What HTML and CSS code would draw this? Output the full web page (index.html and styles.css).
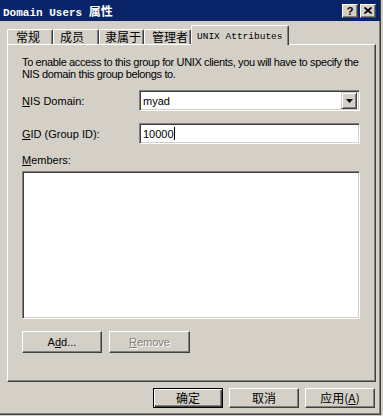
FILE: index.html
```html
<!DOCTYPE html>
<html lang="zh-CN">
<head>
  <meta charset="UTF-8">
  <title>Domain Users 属性</title>
  <link rel="stylesheet" href="styles.css">
</head>
<body>

<div class="window">
  <div class="titlebar">
    <span class="title">Domain Users <span class="title-cjk">属性</span></span>
    <div class="cap-btns">
      <span class="cap-btn">?</span>
      <span class="cap-btn">
        <svg width="8" height="7" viewBox="0 0 8 7"><path d="M0.5 0.5 L7.5 6.5 M7.5 0.5 L0.5 6.5" stroke="#000" stroke-width="1.8"/></svg>
      </span>
    </div>
  </div>

  <div class="tabs">
    <span class="tab tab-1">常规</span>
    <span class="tab tab-2">成员</span>
    <span class="tab tab-3">隶属于</span>
    <span class="tab tab-4">管理者</span>
    <span class="tab active">UNIX Attributes</span>
  </div>

  <div class="panel">
    <p class="intro">To enable access to this group for UNIX clients, you will have to specify the<br>NIS domain this group belongs to.</p>

    <div class="field">
      <label><u>N</u>IS Domain:</label>
      <div class="combo">
        <span class="value">myad</span>
        <span class="drop">
          <svg width="7" height="4" viewBox="0 0 7 4"><path d="M0 0 H7 L3.5 4 Z" fill="#000"/></svg>
        </span>
      </div>
    </div>

    <div class="field gid">
      <label><u>G</u>ID (Group ID):</label>
      <div class="edit"><span class="value">10000</span><span class="caret"></span></div>
    </div>

    <label class="members-label"><u>M</u>embers:</label>
    <div class="listbox"></div>

    <div class="list-btns">
      <button class="btn btn-add">A<u>d</u>d...</button>
      <button class="btn btn-remove" disabled><u>R</u>emove</button>
    </div>
  </div>

  <div class="footer">
    <button class="btn default">确定</button>
    <button class="btn">取消</button>
    <button class="btn">应用(<u>A</u>)</button>
  </div>
</div>

</body>
</html>
```

FILE: styles.css
```css
* {
  box-sizing: border-box;
}
body {
  margin: 0;
  background-color: #d4d0c8;
  font-family: "Liberation Sans", "Noto Sans CJK SC", sans-serif;
  font-size: 11px;
  color: #000;
}
.window {
  width: 381px;
  height: 415px;
  background: #d4d0c8;
  border-right: 1px solid #404040;
  border-bottom: 1px solid #404040;
  box-shadow: inset -1px -1px 0 #808080;
}
.titlebar {
  height: 21px;
  background: #0a246a;
  color: #fff;
  display: flex;
  align-items: center;
  justify-content: space-between;
  padding: 0 4px 0 3px;
}
.title {
  font-family: "Liberation Mono", monospace;
  font-weight: bold;
  font-size: 11px;
  white-space: pre;
}
.title-cjk {
  font-family: "Noto Sans CJK SC", sans-serif;
  font-size: 12px;
}
.cap-btns {
  display: flex;
  gap: 2px;
}
.cap-btn {
  width: 16px;
  height: 14px;
  display: flex;
  align-items: center;
  justify-content: center;
  background: #d4d0c8;
  color: #000;
  font-family: "Liberation Sans", sans-serif;
  font-weight: bold;
  font-size: 11px;
  border-top: 1px solid #fff;
  border-left: 1px solid #fff;
  border-right: 1px solid #404040;
  border-bottom: 1px solid #404040;
  box-shadow: inset -1px -1px 0 #808080;
}

/* tab strip */
.tabs {
  display: flex;
  align-items: flex-end;
  height: 23px;
  padding-left: 7px;
}
.tab {
  height: 15px;
  padding-left: 8px;
  font-family: "Noto Sans CJK SC", sans-serif;
  font-size: 12px;
  line-height: 14px;
  border-top: 1px solid #fff;
  border-left: 1px solid #fff;
  border-right: 1px solid #404040;
  box-shadow: inset -1px 0 0 #808080;
  border-top-left-radius: 2px;
  border-top-right-radius: 2px;
}
.tab-1 { width: 46px; }
.tab-2 { width: 46px; padding-left: 6px; }
.tab-3 { width: 45px; padding-left: 5px; }
.tab-4 { width: 47px; padding-left: 7px; }
.tab.active {
  position: relative;
  z-index: 1;
  width: 98px;
  height: 20px;
  margin-bottom: -1px;
  padding-left: 5px;
  background: #d4d0c8;
  font-family: "Liberation Mono", monospace;
  font-size: 9.5px;
  line-height: 22px;
}

/* page */
.panel {
  margin-left: 7px;
  width: 369px;
  height: 338px;
  padding: 11px 14px 0 14px;
  border-top: 1px solid #fff;
  border-left: 1px solid #fff;
  border-right: 1px solid #404040;
  border-bottom: 1px solid #404040;
  box-shadow: inset -1px -1px 0 #808080;
}
.intro {
  margin: 0;
  line-height: 12px;
  letter-spacing: -0.37px;
  white-space: nowrap;
}
.field {
  display: flex;
  align-items: center;
  margin-top: 10px;
}
.field.gid {
  margin-top: 12px;
}
.field label {
  width: 117px;
}
.combo, .edit {
  width: 221px;
  height: 21px;
  display: flex;
  align-items: center;
  background: #fff;
  border-top: 1px solid #808080;
  border-left: 1px solid #808080;
  border-right: 1px solid #fff;
  border-bottom: 1px solid #fff;
  box-shadow: inset 1px 1px 0 #404040, inset -1px -1px 0 #d4d0c8;
  padding-left: 3px;
}
.combo .value {
  flex: 1;
}
.drop {
  width: 16px;
  height: 17px;
  margin-right: 2px;
  display: flex;
  align-items: center;
  justify-content: center;
  background: #d4d0c8;
  border-top: 1px solid #d4d0c8;
  border-left: 1px solid #d4d0c8;
  border-right: 1px solid #404040;
  border-bottom: 1px solid #404040;
  box-shadow: inset 1px 1px 0 #fff, inset -1px -1px 0 #808080;
}
.caret {
  width: 1px;
  height: 13px;
  background: #000;
}
.members-label {
  display: block;
  margin-top: 10px;
  line-height: 12px;
}
.listbox {
  margin-top: 5px;
  width: 338px;
  height: 148px;
  background: #fff;
  border-top: 1px solid #808080;
  border-left: 1px solid #808080;
  border-right: 1px solid #fff;
  border-bottom: 1px solid #fff;
  box-shadow: inset 1px 1px 0 #404040, inset -1px -1px 0 #d4d0c8;
}
.list-btns {
  display: flex;
  gap: 7px;
  margin-top: 12px;
}

/* buttons */
.btn {
  height: 22px;
  padding: 0;
  background: #d4d0c8;
  color: #000;
  font-family: "Liberation Sans", "Noto Sans CJK SC", sans-serif;
  font-size: 11px;
  border-top: 1px solid #fff;
  border-left: 1px solid #fff;
  border-right: 1px solid #404040;
  border-bottom: 1px solid #404040;
  border-radius: 0;
  box-shadow: inset -1px -1px 0 #808080;
}
.btn-add {
  width: 80px;
}
.btn-remove {
  width: 81px;
  color: #808080;
  text-shadow: 1px 1px 0 #fff;
}
.footer {
  display: flex;
  justify-content: flex-end;
  gap: 6px;
  padding: 6px 5px 0 0;
}
.footer .btn {
  width: 70px;
  height: 20px;
  font-family: "Noto Sans CJK SC", sans-serif;
  font-size: 12px;
  line-height: 14px;
}
.footer .btn.default {
  border: 1px solid #000;
  box-shadow: inset 1px 1px 0 #fff, inset -1px -1px 0 #404040, inset -2px -2px 0 #808080;
}
```
